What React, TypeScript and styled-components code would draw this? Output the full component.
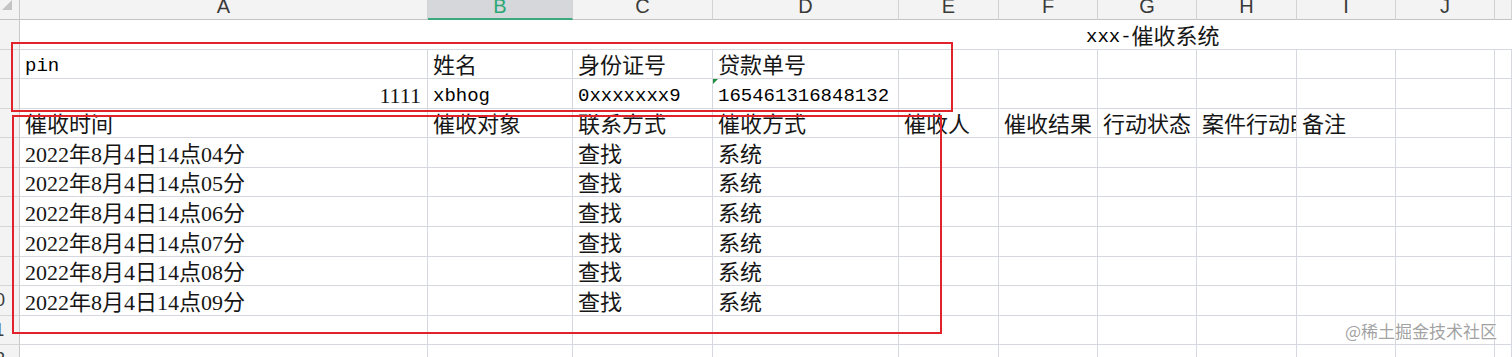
import React from 'react';
import styled, { createGlobalStyle } from 'styled-components';

type Align = 'left' | 'right';

interface CellDef {
  text?: string;
  align?: Align;
  mono?: boolean;
  marker?: boolean;
}

const COLUMNS = [
  { key: 'A', width: 408 },
  { key: 'B', width: 145 },
  { key: 'C', width: 140 },
  { key: 'D', width: 186 },
  { key: 'E', width: 100 },
  { key: 'F', width: 99 },
  { key: 'G', width: 99 },
  { key: 'H', width: 100 },
  { key: 'I', width: 99 },
  { key: 'J', width: 99 },
  { key: 'K', width: 17 },
];

const ROW_HEIGHTS = [30, 29, 30, 29, 30, 29, 30, 30, 29, 30, 29, 30];

const ACTIVE_COLUMN = 'B';

const dates = ['04', '05', '06', '07', '08', '09'].map(
  (m) => `2022年8月4日14点${m}分`
);

// rows 2..12, row 1 is the merged title
const BODY: CellDef[][] = [
  [{ text: 'pin', mono: true }, { text: '姓名' }, { text: '身份证号' }, { text: '贷款单号' }],
  [
    { text: '1111', align: 'right' },
    { text: 'xbhog', mono: true },
    { text: '0xxxxxxx9', mono: true },
    { text: '165461316848132', mono: true, marker: true },
  ],
  ['催收时间', '催收对象', '联系方式', '催收方式', '催收人', '催收结果', '行动状态', '案件行动时间', '备注'].map(
    (text) => ({ text })
  ),
  ...dates.map((d) => [{ text: d }, {}, { text: '查找' }, { text: '系统' }]),
  [],
  [],
];

const GlobalStyle = createGlobalStyle`
  html, body {
    margin: 0;
    padding: 0;
    background: #ffffff;
  }
`;

const Page = styled.div`
  position: relative;
  width: 1512px;
  height: 357px;
  overflow: hidden;
  background: #ffffff;
`;

const Sheet = styled.div`
  display: grid;
  grid-template-columns: 20px ${COLUMNS.map((c) => `${c.width}px`).join(' ')};
  grid-template-rows: 20px ${ROW_HEIGHTS.map((h) => `${h}px`).join(' ')};
`;

const Corner = styled.div`
  background: #f3f3f3;
  border-right: 1px solid #c9c9c9;
  border-bottom: 1px solid #c2c2c2;
  overflow: hidden;
`;

const ColHeader = styled.div<{ $active?: boolean }>`
  display: flex;
  justify-content: center;
  align-items: flex-start;
  overflow: hidden;
  background: ${(p) => (p.$active ? '#d5d7db' : '#f3f3f3')};
  border-right: 1px solid #d2d2d2;
  border-bottom: ${(p) => (p.$active ? '2px solid #3aaa7e' : '1px solid #c2c2c2')};
  font-family: 'Liberation Sans', Arial, sans-serif;
  font-size: 20px;
  line-height: 12px;
  color: ${(p) => (p.$active ? '#2aa874' : '#3a3a3a')};
`;

const RowHeader = styled.div`
  overflow: hidden;
  display: flex;
  align-items: center;
  background: #f3f3f3;
  border-right: 1px solid #c9c9c9;
  border-bottom: 1px solid #d6d6d6;
  font-family: 'Liberation Sans', Arial, sans-serif;
  font-size: 18px;
  color: #3a3a3a;
`;

// the row header is wider in the sheet; only its right edge is on screen
const RowNumber = styled.span`
  flex: none;
  width: 48px;
  margin-left: -29px;
  text-align: center;
`;

const Cell = styled.div<{ $align?: Align }>`
  position: relative;
  display: flex;
  align-items: flex-end;
  justify-content: ${(p) => (p.$align === 'right' ? 'flex-end' : 'flex-start')};
  padding: 0 6px 0 5px;
  overflow: hidden;
  white-space: nowrap;
  border-right: 1px solid #d6d8df;
  border-bottom: 1px solid #d6d8df;
  font-family: 'Liberation Serif', 'Noto Sans CJK SC', serif;
  font-size: 22px;
  line-height: 24px;
  color: #161616;
`;

const TitleCell = styled(Cell)`
  grid-column: 2 / -1;
  border-right: none;
  padding-left: 1066px;
`;

const Mono = styled.span`
  font-family: 'Liberation Mono', 'Noto Sans CJK SC', monospace;
  font-size: 19px;
  color: #000000;
`;

const Marker = styled.span`
  position: absolute;
  left: 0;
  top: 0;
  width: 0;
  height: 0;
  border-top: 5px solid #1f8f3f;
  border-right: 5px solid transparent;
`;

const Highlight = styled.div<{ $x: number; $y: number; $w: number; $h: number }>`
  position: absolute;
  left: ${(p) => p.$x}px;
  top: ${(p) => p.$y}px;
  width: ${(p) => p.$w}px;
  height: ${(p) => p.$h}px;
  box-sizing: border-box;
  border: 2px solid #e0222a;
  pointer-events: none;
`;

const Watermark = styled.div`
  position: absolute;
  right: 15px;
  top: 319px;
  font-family: 'Noto Sans CJK SC', sans-serif;
  font-size: 17px;
  line-height: 24px;
  color: rgba(120, 120, 120, 0.7);
  text-shadow: 0 0 1px #ffffff, 0 0 2px #ffffff;
  pointer-events: none;
`;

const CornerMark = () => (
  <svg width="20" height="20" viewBox="0 0 20 20">
    <polygon points="2,10 12,10 12,0" fill="#c4c4c4" />
  </svg>
);

const renderCell = (cell: CellDef | undefined, key: string) => (
  <Cell key={key} $align={cell?.align}>
    {cell?.marker && <Marker />}
    {cell?.text && (cell.mono ? <Mono>{cell.text}</Mono> : cell.text)}
  </Cell>
);

const App = () => {
  return (
    <Page>
      <GlobalStyle />
      <Sheet>
        <Corner>
          <CornerMark />
        </Corner>
        {COLUMNS.map(({ key }) => (
          <ColHeader key={key} $active={key === ACTIVE_COLUMN}>
            {key === 'K' ? '' : key}
          </ColHeader>
        ))}

        <RowHeader>
          <RowNumber>1</RowNumber>
        </RowHeader>
        <TitleCell>
          <Mono>xxx-</Mono>催收系统
        </TitleCell>

        {BODY.map((row, r) => (
          <React.Fragment key={r}>
            <RowHeader>
              <RowNumber>{r + 2}</RowNumber>
            </RowHeader>
            {COLUMNS.map((col, c) => renderCell(row[c], `${r}-${col.key}`))}
          </React.Fragment>
        ))}
      </Sheet>

      <Highlight $x={11} $y={42} $w={942} $h={70} />
      <Highlight $x={12} $y={115} $w={930} $h={219} />

      <Watermark>@稀土掘金技术社区</Watermark>
    </Page>
  );
};

export default App;
